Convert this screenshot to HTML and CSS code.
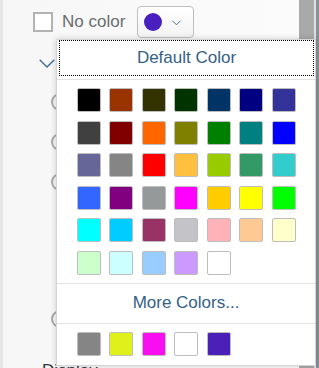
FILE: index.html
```html
<!DOCTYPE html>
<html lang="en">
<head>
    <meta charset="UTF-8">
    <title>Color Picker Popover</title>
    <link rel="stylesheet" href="styles.css">
</head>
<body>
    <div class="screen">
        <!-- Settings panel behind the popover -->
        <div class="panel">
            <div class="panel-edge"></div>
            <div class="panel-body">
                <div class="color-row">
                    <span class="checkbox"></span>
                    <span class="label">No color</span>
                    <button class="picker-btn">
                        <span class="dot"></span>
                        <svg class="small-chevron" width="9" height="6" viewBox="0 0 9 6"><path d="M0.5 0.8 L4.5 4.8 L8.5 0.8" fill="none" stroke="#4a6f94" stroke-width="1"/></svg>
                    </button>
                </div>
                <div class="expander">
                    <svg width="16" height="9" viewBox="0 0 16 9"><path d="M0.7 0.7 L8 8 L15.3 0.7" fill="none" stroke="#3f6aa0" stroke-width="1.4"/></svg>
                </div>
                <div class="radios">
                    <span class="radio"></span>
                    <span class="radio"></span>
                    <span class="radio"></span>
                    <span class="radio radio-last"></span>
                </div>
                <div class="section-title">Display</div>
            </div>
        </div>

        <!-- Scrollbar strips -->
        <div class="scroll-track"></div>
        <div class="scroll-edge"></div>
        <div class="scroll-rail"></div>

        <!-- Color palette popover -->
        <div class="popover">
            <div class="default-wrap">
                <div class="default-btn">Default Color</div>
            </div>
            <div class="swatches">
                <span class="swatch" style="background:#000000"></span>
                <span class="swatch" style="background:#993300"></span>
                <span class="swatch" style="background:#333300"></span>
                <span class="swatch" style="background:#003300"></span>
                <span class="swatch" style="background:#003366"></span>
                <span class="swatch" style="background:#000080"></span>
                <span class="swatch" style="background:#333399"></span>

                <span class="swatch" style="background:#404040"></span>
                <span class="swatch" style="background:#800000"></span>
                <span class="swatch" style="background:#ff6600"></span>
                <span class="swatch" style="background:#808000"></span>
                <span class="swatch" style="background:#008000"></span>
                <span class="swatch" style="background:#008080"></span>
                <span class="swatch" style="background:#0000ff"></span>

                <span class="swatch" style="background:#666699"></span>
                <span class="swatch" style="background:#858585"></span>
                <span class="swatch" style="background:#ff0000"></span>
                <span class="swatch" style="background:#ffc040"></span>
                <span class="swatch" style="background:#99cc00"></span>
                <span class="swatch" style="background:#339966"></span>
                <span class="swatch" style="background:#33cccc"></span>

                <span class="swatch" style="background:#3366ff"></span>
                <span class="swatch" style="background:#800080"></span>
                <span class="swatch" style="background:#969999"></span>
                <span class="swatch" style="background:#ff00ff"></span>
                <span class="swatch" style="background:#ffcc00"></span>
                <span class="swatch" style="background:#ffff00"></span>
                <span class="swatch" style="background:#00ff00"></span>

                <span class="swatch" style="background:#00ffff"></span>
                <span class="swatch" style="background:#00ccff"></span>
                <span class="swatch" style="background:#993366"></span>
                <span class="swatch" style="background:#c4c4c8"></span>
                <span class="swatch" style="background:#ffb3b8"></span>
                <span class="swatch" style="background:#ffc994"></span>
                <span class="swatch" style="background:#ffffcc"></span>

                <span class="swatch" style="background:#ccffcc"></span>
                <span class="swatch" style="background:#ccffff"></span>
                <span class="swatch" style="background:#99ccff"></span>
                <span class="swatch" style="background:#cc99ff"></span>
                <span class="swatch" style="background:#ffffff"></span>
            </div>
            <div class="more-colors">More Colors...</div>
            <div class="swatches recent">
                <span class="swatch" style="background:#858585"></span>
                <span class="swatch" style="background:#dff01a"></span>
                <span class="swatch" style="background:#f80ef0"></span>
                <span class="swatch" style="background:#ffffff"></span>
                <span class="swatch" style="background:#4a20b8"></span>
            </div>
        </div>
    </div>
</body>
</html>
```

FILE: styles.css
```css
/* Basic Reset */
* {
    margin: 0;
    padding: 0;
    box-sizing: border-box;
}

body {
    font-family: 'Liberation Sans', Arial, sans-serif;
    background: #ffffff;
    overflow: hidden;
}

.screen {
    position: relative;
    width: 319px;
    height: 368px;
    display: flex;
    overflow: hidden;
}

/* Panel behind */
.panel {
    width: 299px;
    display: flex;
}

.panel-edge {
    width: 3px;
    background: #e6e6e6;
}

.panel-body {
    flex: 1;
    background: linear-gradient(to right, #f7f7f7, #fbfbfb);
    padding-left: 30px;
    display: flex;
    flex-direction: column;
}

.color-row {
    display: flex;
    align-items: center;
    height: 32px;
    margin-top: 6px;
}

.checkbox {
    width: 20px;
    height: 20px;
    border: 2px solid #b3b3b3;
    background: #fff;
    margin-right: 9px;
}

.label {
    font-size: 17px;
    color: #6a6d70;
    margin-right: 12px;
}

.picker-btn {
    width: 57px;
    height: 32px;
    border: 1px solid #bfbfbf;
    border-radius: 4px;
    background: linear-gradient(#ffffff, #f3f3f3);
    display: flex;
    align-items: center;
    padding-left: 6px;
}

.dot {
    width: 18px;
    height: 18px;
    border-radius: 50%;
    background: #4a1fbf;
}

.small-chevron {
    margin-left: 10px;
    margin-top: 2px;
}

.expander {
    margin-top: 21px;
    margin-left: 6px;
    height: 9px;
}

.expander svg {
    display: block;
}

.radios {
    display: flex;
    flex-direction: column;
    margin-left: 18px;
    margin-top: 25px;
}

.radio {
    width: 18px;
    height: 18px;
    border: 2px solid #ababab;
    border-radius: 50%;
    margin-bottom: 22px;
}

.radio-last {
    margin-top: 97px;
    margin-bottom: 0;
}

.section-title {
    margin-top: 33px;
    margin-left: 9px;
    font-size: 17px;
    color: #32363a;
}

/* Scrollbar strips */
.scroll-track {
    width: 15px;
    background: #a9a9a9;
}

.scroll-edge {
    width: 2px;
    background: #dde2e8;
}

.scroll-rail {
    width: 3px;
    background: #8b9097;
}

/* Popover */
.popover {
    position: absolute;
    left: 56px;
    top: 39px;
    width: 260px;
    height: 327px;
    background: #fff;
    border: 1px solid #d5d5d5;
    box-shadow: 0 0 6px rgba(0, 0, 0, 0.18);
}

.default-wrap {
    padding: 0 1px 3px 2px;
    border-bottom: 1px solid #e2e2e2;
}

.default-btn {
    height: 36px;
    border: 1px dotted #000;
    display: flex;
    align-items: center;
    justify-content: center;
    font-size: 17px;
    color: #346187;
}

.swatches {
    display: grid;
    grid-template-columns: repeat(7, 24px);
    gap: 8.5px;
    justify-content: center;
    padding: 8px 0;
    border-bottom: 1px solid #e2e2e2;
}

.swatch {
    width: 24px;
    height: 24px;
    border: 1px solid #bdbdbd;
    border-radius: 2px;
}

.more-colors {
    height: 40px;
    display: flex;
    align-items: center;
    justify-content: center;
    font-size: 17px;
    color: #346187;
    border-bottom: 1px solid #e2e2e2;
}

.recent {
    border-bottom: none;
    padding-top: 8px;
}
```
